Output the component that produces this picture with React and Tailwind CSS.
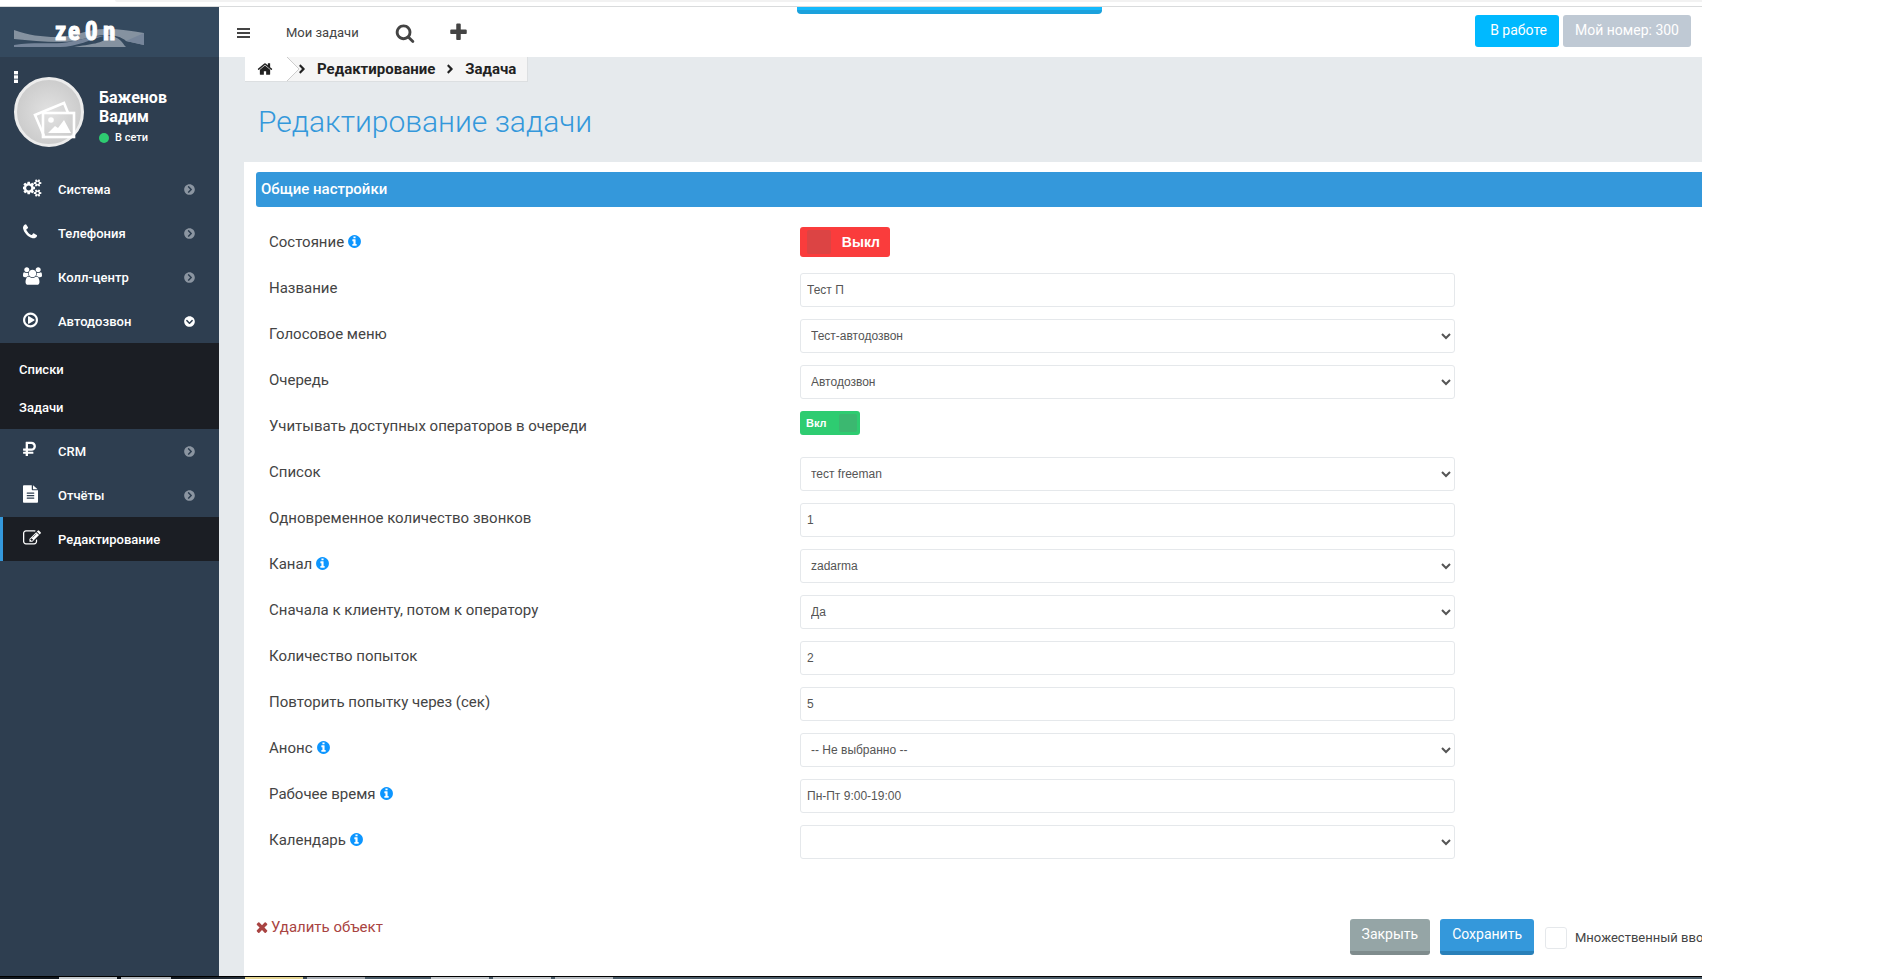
import React from 'react';
import { FaAngleRight, FaChevronCircleDown, FaChevronCircleRight } from 'react-icons/fa';

const GEAR_SMALL =
  'v140q0 16-149 31-12 27-30 52 51 113 51 138 0 4-4 7-122 71-124 71-8 0-46-47t-52-68q-20 2-30 2t-30-2q-14 21-52 68t-46 47q-2 0-124-71-4-3-4-7 0-25 51-138-18-25-30-52-149-15-149-31v-140q0-16 149-31 13-29 30-52-51-113-51-138 0-4 4-7 4-2 35-20t59-34 30-16q8 0 46 46.5t52 67.5q20-2 30-2t30 2q51-71 92-112l6-2q4 0 124 70 4 3 4 7 0 25-51 138 17 23 30 52 149 15 149 31z';

const icons = {
  cogs: {
    w: 1920,
    d:
      'M832 896q0-106-75-181t-181-75-181 75-75 181 75 181 181 75 181-75 75-181zm768 512q0-52-38-90t-90-38-90 38-38 90q0 53 37.5 90.5t90.5 37.5 90.5-37.5 37.5-90.5zm0-1024q0-52-38-90t-90-38-90 38-38 90q0 53 37.5 90.5t90.5 37.5 90.5-37.5 37.5-90.5zm-384 421v185q0 10-7 19.5t-16 10.5l-155 24q-11 35-32 76 34 48 90 115 7 11 7 20 0 12-7 19-23 30-82.5 89.5t-78.5 59.5q-11 0-21-7l-115-90q-37 19-77 31-11 108-23 155-7 24-30 24h-186q-11 0-20-7.5t-10-17.5l-23-153q-34-10-75-31l-118 89q-7 7-20 7-11 0-21-8-144-133-144-160 0-9 7-19 10-14 41-53t47-61q-23-44-35-82l-152-24q-10-1-17-9.5t-7-19.5v-185q0-10 7-19.5t16-10.5l155-24q11-35 32-76-34-48-90-115-7-11-7-20 0-12 7-20 22-30 82-89t79-59q11 0 21 7l115 90q34-18 77-32 11-108 23-154 7-24 30-24h186q11 0 20 7.5t10 17.5l23 153q34 10 75 31l118-89q8-7 20-7 11 0 21 8 144 133 144 160 0 8-7 19-12 16-42 54t-45 60q23 48 34 82l152 23q10 2 17 10.5t7 19.5zM1856 1338' +
      GEAR_SMALL +
      'M1856 314' +
      GEAR_SMALL,
  },
  phone: {
    w: 1408,
    d: 'M1408 1240q0 27-10 70.5t-21 68.5q-21 50-122 106-94 51-186 51-27 0-52.5-3.5t-57.5-12.5-47.5-14.5-55.5-20.5-49-18q-98-35-175-83-128-79-264.5-215.5t-215.5-264.5q-48-77-83-175-3-9-18-49t-20.5-55.5-14.5-47.5-12.5-57.5-3.5-52.5q0-92 51-186 56-101 106-122 25-11 68.5-21t70.5-10q14 0 21 3 18 6 53 76 11 19 30 54t35 63.5 31 53.5q3 4 17.5 25t21.5 35.5 7 28.5q0 20-28.5 50t-62 55-62 53-28.5 46q0 9 5 22.5t8.5 20.5 14 24 11.5 19q76 137 174 235t235 174q2 1 19 11.5t24 14 20.5 8.5 22.5 5q18 0 46-28.5t53-62 55-62 50-28.5q14 0 28.5 7t35.5 21.5 25 17.5q25 15 53.5 31t63.5 35 54 30q70 35 76 53 3 7 3 21z',
  },
  users: {
    w: 1920,
    d: 'M593 896q-162 5-265 128h-134q-82 0-138-40.5t-56-118.5q0-353 124-353 6 0 43.5 21t97.5 42.5 119 21.5q67 0 133-23-5 37-5 66 0 139 81 256zm1071 637q0 120-73 189.5t-194 69.5h-874q-121 0-194-69.5t-73-189.5q0-53 3.5-103.5t14-109 26.5-108.5 43-97.5 62-81 85.5-53.5 111.5-20q10 0 43 21.5t73 48 107 48 135 21.5 135-21.5 107-48 73-48 43-21.5q61 0 111.5 20t85.5 53.5 62 81 43 97.5 26.5 108.5 14 109 3.5 103.5zm-1024-1277q0 106-75 181t-181 75-181-75-75-181 75-181 181-75 181 75 75 181zm704 384q0 159-112.5 271.5t-271.5 112.5-271.5-112.5-112.5-271.5 112.5-271.5 271.5-112.5 271.5 112.5 112.5 271.5zm576 225q0 78-56 118.5t-138 40.5h-134q-103-123-265-128 81-117 81-256 0-29-5-66 66 23 133 23 59 0 119-21.5t97.5-42.5 43.5-21q124 0 124 353zm-128-609q0 106-75 181t-181 75-181-75-75-181 75-181 181-75 181 75 75 181z',
  },
  play: {
    w: 1536,
    d: 'M1184 896q0 37-32 55l-544 320q-15 9-32 9-16 0-32-8-32-19-32-56v-640q0-37 32-56 33-18 64 1l544 320q32 18 32 55zm128 0q0-148-73-273t-198-198-273-73-273 73-198 198-73 273 73 273 198 198 273 73 273-73 198-198 73-273zm224 0q0 209-103 385.5t-279.5 279.5-385.5 103-385.5-103-279.5-279.5-103-385.5 103-385.5 279.5-279.5 385.5-103 385.5 103 279.5 279.5 103 385.5z',
  },
  rub: {
    w: 1280,
    d: 'M1045 523q0-100-65-162t-171-62h-320v448h320q106 0 171-62t65-162zm235 0q0 193-126.5 315t-324.5 122h-340v118h505q14 0 23 9t9 23v128q0 14-9 23t-23 9h-505v192q0 14-9.5 23t-22.5 9h-167q-14 0-23-9t-9-23v-192h-224q-14 0-23-9t-9-23v-128q0-14 9-23t23-9h224v-118h-224q-14 0-23-9t-9-23v-149q0-13 9-22.5t23-9.5h224v-629q0-14 9-23t23-9h539q198 0 324.5 122t126.5 315z',
  },
  file: {
    w: 1536,
    d: 'M1468 380q14 14 28 36h-472v-416q22 14 36 28zM992 512h544v1184q0 40-28 68t-68 28h-1344q-40 0-68-28t-28-68v-1600q0-40 28-68t68-28h800v416q0 40 28 68t68 28zM384 768v64q0 32 32 32h704q32 0 32-32v-64q0-32-32-32h-704q-32 0-32 32zM384 1024v64q0 32 32 32h704q32 0 32-32v-64q0-32-32-32h-704q-32 0-32 32zM384 1280v64q0 32 32 32h704q32 0 32-32v-64q0-32-32-32h-704q-32 0-32 32z',
  },
  edit: {
    w: 1792,
    d: 'M888 1184l116-116-152-152-116 116v56h96v96h56zm440-720q-16-16-33 1l-350 350q-17 17-1 33t33-1l350-350q17-17 1-33zm80 594v190q0 119-84.5 203.5t-203.5 84.5h-832q-119 0-203.5-84.5t-84.5-203.5v-832q0-119 84.5-203.5t203.5-84.5h832q63 0 117 25 15 7 18 23 3 17-9 29l-49 49q-14 14-32 8-23-6-45-6h-832q-66 0-113 47t-47 113v832q0 66 47 113t113 47h832q66 0 113-47t47-113v-126q0-13 9-22l64-64q15-15 35-7t20 29zm-96-738l288 288-672 672h-288v-288zm444 132l-92 92-288-288 92-92q28-28 68-28t68 28l152 152q28 28 28 68t-28 68z',
  },
  search: {
    w: 1792,
    d: 'M1216 832q0-185-131.5-316.5t-316.5-131.5-316.5 131.5-131.5 316.5 131.5 316.5 316.5 131.5 316.5-131.5 131.5-316.5zm512 832q0 52-38 90t-90 38q-54 0-90-38l-343-342q-179 124-399 124-143 0-273.5-55.5t-225-150-150-225-55.5-273.5 55.5-273.5 150-225 225-150 273.5-55.5 273.5 55.5 225 150 150 225 55.5 273.5q0 220-124 399l343 343q37 37 37 90z',
  },
  plus: {
    w: 1792,
    d: 'M1600 736v192q0 40-28 68t-68 28h-416v416q0 40-28 68t-68 28h-192q-40 0-68-28t-28-68v-416h-416q-40 0-68-28t-28-68v-192q0-40 28-68t68-28h416v-416q0-40 28-68t68-28h192q40 0 68 28t28 68v416h416q40 0 68 28t28 68z',
  },
  home: {
    w: 1792,
    d: 'M1472 992v480q0 26-19 45t-45 19h-384v-384h-256v384h-384q-26 0-45-19t-19-45v-480q0-1 .5-3t.5-3l575-474 575 474q1 2 1 6zm223-69l-62 74q-8 9-21 11h-3q-13 0-21-7l-692-577-692 577q-12 8-24 7-13-2-21-11l-62-74q-8-10-7-23.5t11-21.5l719-599q32-26 76-26t76 26l244 204v-195q0-14 9-23t23-9h192q14 0 23 9t9 23v408l219 182q10 8 11 21.5t-7 23.5z',
  },
  info: {
    w: 1792,
    d: 'M1152 1376v-160q0-14-9-23t-23-9h-96v-512q0-14-9-23t-23-9h-320q-14 0-23 9t-9 23v160q0 14 9 23t23 9h96v320h-96q-14 0-23 9t-9 23v160q0 14 9 23t23 9h448q14 0 23-9t9-23zm-128-896v-160q0-14-9-23t-23-9h-192q-14 0-23 9t-9 23v160q0 14 9 23t23 9h192q14 0 23-9t9-23zm640 416q0 209-103 385.5t-279.5 279.5-385.5 103-385.5-103-279.5-279.5-103-385.5 103-385.5 279.5-279.5 385.5-103 385.5 103 279.5 279.5 103 385.5z',
  },
  times: {
    w: 1792,
    d: 'M1490 1322q0 40-28 68l-136 136q-28 28-68 28t-68-28l-294-294-294 294q-28 28-68 28t-68-28l-136-136q-28-28-28-68t28-68l294-294-294-294q-28-28-28-68t28-68l136-136q28-28 68-28t68 28l294 294 294-294q28-28 68-28t68 28l136 136q28 28 28 68t-28 68l-294 294 294 294q28 28 28 68z',
  },
};

const Icon = ({ name, className }) => (
  <svg viewBox={`0 0 ${icons[name].w} 1792`} className={className} fill="currentColor" fillRule="evenodd" aria-hidden="true">
    <path d={icons[name].d} />
  </svg>
);

const Logo = () => (
  <svg className="ml-3.5 mt-2.5 w-[130px] h-[32px]" viewBox="0 0 130 32" role="img" aria-label="ze0n">
    <path d="M0 13C14 18 28 20 42 20C62 20 72 12 92 12C106 12 118 14 130 16V28L112 24C108 20 100 18 92 18C78 18 66 25 46 25C30 25 14 23 0 22Z" fill="#8592a0" />
    <path d="M0 28C20 25 34 27 48 26C64 24 76 19 90 19C78 22 62 30 46 30H0Z" fill="#76859a" />
    <path d="M60 30C76 27 90 27 94 19C106 19 108 26 112 30Z" fill="#8592a0" />
    <path d="M112 24L130 16V28Z" fill="#76859a" />
    <text
      x="41 54 71 89"
      y="23"
      fill="#fff"
      stroke="#fff"
      strokeWidth="1"
      fontSize="25"
      fontWeight="700"
      fontFamily="'Liberation Sans Narrow', 'Roboto Condensed', 'DejaVu Sans Condensed', sans-serif"
    >
      ze0n
    </text>
  </svg>
);

const Avatar = () => (
  <div className="flex size-[70px] shrink-0 items-center justify-center rounded-full border-3 border-[#ececec] bg-radial from-[#e2e2e2] to-[#c4c4c4]">
    <svg viewBox="0 0 64 64" className="size-16" fill="none" stroke="#fff" strokeWidth="2.6">
      <path d="M27 56L18 35L47 23L51 33" />
      <rect x="26" y="33" width="31" height="24" />
      <circle cx="34" cy="40" r="2.8" fill="#fff" stroke="none" />
      <path d="M31 53L38 46L41 48L47 40L54 53Z" fill="#fff" stroke="none" />
    </svg>
  </div>
);

const menuTop = [
  { icon: 'cogs', label: 'Система', size: 'w-[19px] h-[18px]' },
  { icon: 'phone', label: 'Телефония', size: 'w-[14px] h-[18px]' },
  { icon: 'users', label: 'Колл-центр', size: 'w-[19px] h-[18px]' },
  { icon: 'play', label: 'Автодозвон', size: 'w-[15px] h-[18px]', open: true },
];

const menuBottom = [
  { icon: 'rub', label: 'CRM', size: 'w-[13px] h-[18px]' },
  { icon: 'file', label: 'Отчёты', size: 'w-[15px] h-[18px]' },
];

const MenuItem = ({ icon, label, size, open }) => (
  <a href="#" className="flex h-11 items-center pr-6 pl-[23px]">
    <span className="w-[35px] pb-0.5">
      <Icon name={icon} className={size} />
    </span>
    <span className="grow pt-0.5">{label}</span>
    {open ? <FaChevronCircleDown className="size-[11px]" /> : <FaChevronCircleRight className="size-[11px] text-[#8b95a1]" />}
  </a>
);

const Sidebar = () => (
  <aside className="w-[219px] shrink-0 bg-[#2e3e50] text-[13px] font-medium text-white">
    <div className="h-[50px] overflow-hidden bg-[#34495e]">
      <Logo />
    </div>
    <div className="flex h-[110px] pt-5 pl-3.5">
      <div className="relative">
        <svg viewBox="0 0 4 12" className="absolute -top-1.5 left-0 h-3 w-1" fill="#fff">
          <rect width="4" height="3.4" />
          <rect y="4.3" width="4" height="3.4" />
          <rect y="8.6" width="4" height="3.4" />
        </svg>
        <Avatar />
      </div>
      <div className="pt-[11px] pl-[15px]">
        <div className="text-base leading-[19px] font-bold">
          Баженов
          <br />
          Вадим
        </div>
        <div className="mt-0.5 flex items-center gap-1.5 text-[11px] leading-5">
          <span className="size-2.5 rounded-full bg-[#2ecc71]" />
          В сети
        </div>
      </div>
    </div>
    <nav>
      {menuTop.map((item) => (
        <MenuItem key={item.label} {...item} />
      ))}
      <div className="bg-[#1b1e24] pt-2 pb-0.5">
        <a href="#" className="flex h-[38px] items-center pl-[19px]">Списки</a>
        <a href="#" className="flex h-[38px] items-center pl-[19px]">Задачи</a>
      </div>
      {menuBottom.map((item) => (
        <MenuItem key={item.label} {...item} />
      ))}
      <a href="#" className="flex h-11 items-center border-l-3 border-[#3498db] bg-[#1b1e24] pl-5">
        <span className="w-[35px] pb-0.5">
          <Icon name="edit" className="h-[18px] w-[18px]" />
        </span>
        <span className="pt-0.5">Редактирование</span>
      </a>
    </nav>
  </aside>
);

const TopBar = () => (
  <header className="relative flex h-[50px] items-center bg-white pt-0.5 pr-[11px] pl-[18px] text-[#444]">
    <button type="button" aria-label="Меню">
      <svg viewBox="0 0 13 11" className="h-[11px] w-[13px]" fill="currentColor">
        <rect width="13" height="2" />
        <rect y="4" width="13" height="2" />
        <rect y="8" width="13" height="2" />
      </svg>
    </button>
    <a href="#" className="ml-9 text-[13px]">Мои задачи</a>
    <button type="button" aria-label="Поиск" className="ml-9">
      <Icon name="search" className="size-5" />
    </button>
    <button type="button" aria-label="Добавить" className="ml-[33px] pb-0.5">
      <Icon name="plus" className="size-[21px]" />
    </button>
    <div className="absolute top-0 left-[39%] h-[7px] w-[305px] rounded-b-sm border-b-4 border-[#1ba1dc] bg-[#14b9fc]" />
    <div className="ml-auto flex gap-1 pb-1 text-sm text-white">
      <button type="button" className="h-8 rounded-[3px] bg-[#00b9ff] pr-3 pb-0.5 pl-[15px]">В работе</button>
      <button type="button" className="h-8 rounded-[3px] bg-[#bfc9d4] px-3 pb-0.5">Мой номер: 300</button>
    </div>
  </header>
);

const Breadcrumbs = () => (
  <nav className="ml-[26px] flex h-[25px] w-fit items-center border-r border-b border-[#dcdfe1] bg-[#f5f5f5] pr-[11px] text-[15px] font-bold text-[#222]">
    <a href="#" aria-label="Главная" className="flex h-full items-center bg-white pr-3.5 pl-3">
      <Icon name="home" className="size-4" />
    </a>
    <svg viewBox="0 0 12 24" className="h-6 w-3">
      <path d="M0 0L12 12L0 24Z" fill="#fff" />
      <path d="M0 0L12 12L0 24" fill="none" stroke="#ccc" />
    </svg>
    <FaAngleRight className="-ml-1 size-3.5" />
    <a href="#" className="ml-2">Редактирование</a>
    <FaAngleRight className="mx-2 size-3.5" />
    <a href="#">Задача</a>
  </nav>
);

const fields = [
  { id: 'state', label: 'Состояние', info: true, type: 'toggleOff' },
  { id: 'name', label: 'Название', type: 'text', value: 'Тест П' },
  { id: 'ivr', label: 'Голосовое меню', type: 'select', value: 'Тест-автодозвон' },
  { id: 'queue', label: 'Очередь', type: 'select', value: 'Автодозвон' },
  { id: 'operators', label: 'Учитывать доступных операторов в очереди', type: 'toggleOn' },
  { id: 'list', label: 'Список', type: 'select', value: 'тест freeman' },
  { id: 'calls', label: 'Одновременное количество звонков', type: 'text', value: '1' },
  { id: 'channel', label: 'Канал', info: true, type: 'select', value: 'zadarma' },
  { id: 'client', label: 'Сначала к клиенту, потом к оператору', type: 'select', value: 'Да' },
  { id: 'attempts', label: 'Количество попыток', type: 'text', value: '2' },
  { id: 'retry', label: 'Повторить попытку через (сек)', type: 'text', value: '5' },
  { id: 'announce', label: 'Анонс', info: true, type: 'select', value: '-- Не выбранно --' },
  { id: 'hours', label: 'Рабочее время', info: true, type: 'text', value: 'Пн-Пт 9:00-19:00' },
  { id: 'calendar', label: 'Календарь', info: true, type: 'select', value: '' },
];

const controlClass = "h-[34px] w-full rounded-[3px] border border-[#e5e8eb] bg-white pr-[7px] pl-1.5 font-['Liberation_Sans'] text-xs text-[#555]";

const Control = ({ id, type, value }) => {
  if (type === 'toggleOff') {
    return (
      <label className="flex h-[30px] w-[90px] items-center justify-between rounded-[3px] bg-[#fa3c3c] pr-2.5 pl-[7px] font-['Liberation_Sans'] text-sm font-bold text-white">
        <input id={id} type="checkbox" className="sr-only" />
        <span className="size-6 rounded-[2px] bg-[#dc4444]" />
        Выкл
      </label>
    );
  }
  if (type === 'toggleOn') {
    return (
      <label className="flex h-6 w-[60px] items-center justify-between rounded-[3px] bg-[#2ecc71] pr-[3px] pl-1.5 font-['Liberation_Sans'] text-[11px] font-bold text-white">
        <input id={id} type="checkbox" defaultChecked className="sr-only" />
        Вкл
        <span className="size-[18px] rounded-[2px] bg-[#3bb870]" />
      </label>
    );
  }
  if (type === 'select') {
    return (
      <select id={id} className={controlClass}>
        <option>{value}</option>
      </select>
    );
  }
  return <input id={id} type="text" defaultValue={value} className={controlClass} />;
};

const Field = ({ id, label, info, type, value }) => (
  <div className="grid h-[46px] grid-cols-[531fr_655fr_247fr] items-start">
    <label htmlFor={id} className="flex h-[30px] items-center gap-[3px]">
      {label}
      {info && (
        <span className="pb-0.5">
          <Icon name="info" className="size-[15px] text-[#0d96ff]" />
        </span>
      )}
    </label>
    <div className="relative">
      <Control id={id} type={type} value={value} />
    </div>
  </div>
);

const Footer = () => (
  <div className="mt-12 flex items-start justify-between pl-2.5">
    <button type="button" className="flex items-center text-[15px] leading-[14px] text-[#a94442]">
      <Icon name="times" className="mr-px size-4" />
      Удалить объект
    </button>
    <div className="flex items-start whitespace-nowrap">
      <button type="button" className="h-9 rounded-[3px] border-b-4 border-[#7f8c8d] bg-[#95a5a6] px-3 pb-0.5 text-sm text-white">Закрыть</button>
      <button type="button" className="ml-2.5 h-9 rounded-[3px] border-b-4 border-[#2980b9] bg-[#3498db] px-3 pb-0.5 text-sm text-white">Сохранить</button>
      <label className="mt-2 ml-[11px] flex w-[157px] items-center gap-2 overflow-hidden text-[13px] text-[#444]">
        <input type="checkbox" className="size-[22px] shrink-0 appearance-none rounded-[3px] border border-[#e5e8eb] bg-white" />
        Множественный ввод
      </label>
    </div>
  </div>
);

const App = () => (
  <div className="flex min-h-screen flex-col bg-white pr-[196px] font-[Roboto,sans-serif]">
    <div className="flex h-[7px] flex-col justify-between border-b border-[#d9dbdc]">
      <div className="ml-[115px] h-0.5 rounded-bl bg-[#f2f2f2]" />
    </div>
    <div className="flex grow">
      <Sidebar />
      <div className="flex min-w-0 grow flex-col bg-[#e6eaed]">
        <TopBar />
        <Breadcrumbs />
        <h1 className="h-20 pt-5 pl-[39px] text-3xl leading-10 font-light text-[#3498db]">Редактирование задачи</h1>
        <main className="ml-[25px] grow bg-white pt-2.5">
          <h2 className="ml-3 flex h-[35px] items-center rounded-l-[3px] bg-[#3498db] pl-[5px] text-[15px] font-medium text-white">Общие настройки</h2>
          <form className="pt-5 pl-[25px] text-[15px] text-[#444]">
            {fields.map((field) => (
              <Field key={field.id} {...field} />
            ))}
          </form>
          <Footer />
        </main>
      </div>
    </div>
    <div className="flex h-[3px] gap-1 border-t border-black bg-linear-to-r from-[#10161d] from-10% to-[#4a5b68] to-20% pl-[59px]">
      <div className="w-[58px] bg-[#c3c8cc]" />
      <div className="w-[50px] bg-[#b5babf]" />
      <div className="ml-[70px] w-[58px] bg-[#e3d491]" />
      <div className="w-[58px] bg-[#a9aeb4]" />
      <div className="ml-[62px] w-[58px] bg-[#c3c8cc]" />
      <div className="w-[58px] bg-[#c3c8cc]" />
      <div className="w-[58px] bg-[#b5babf]" />
    </div>
  </div>
);

export default App;
